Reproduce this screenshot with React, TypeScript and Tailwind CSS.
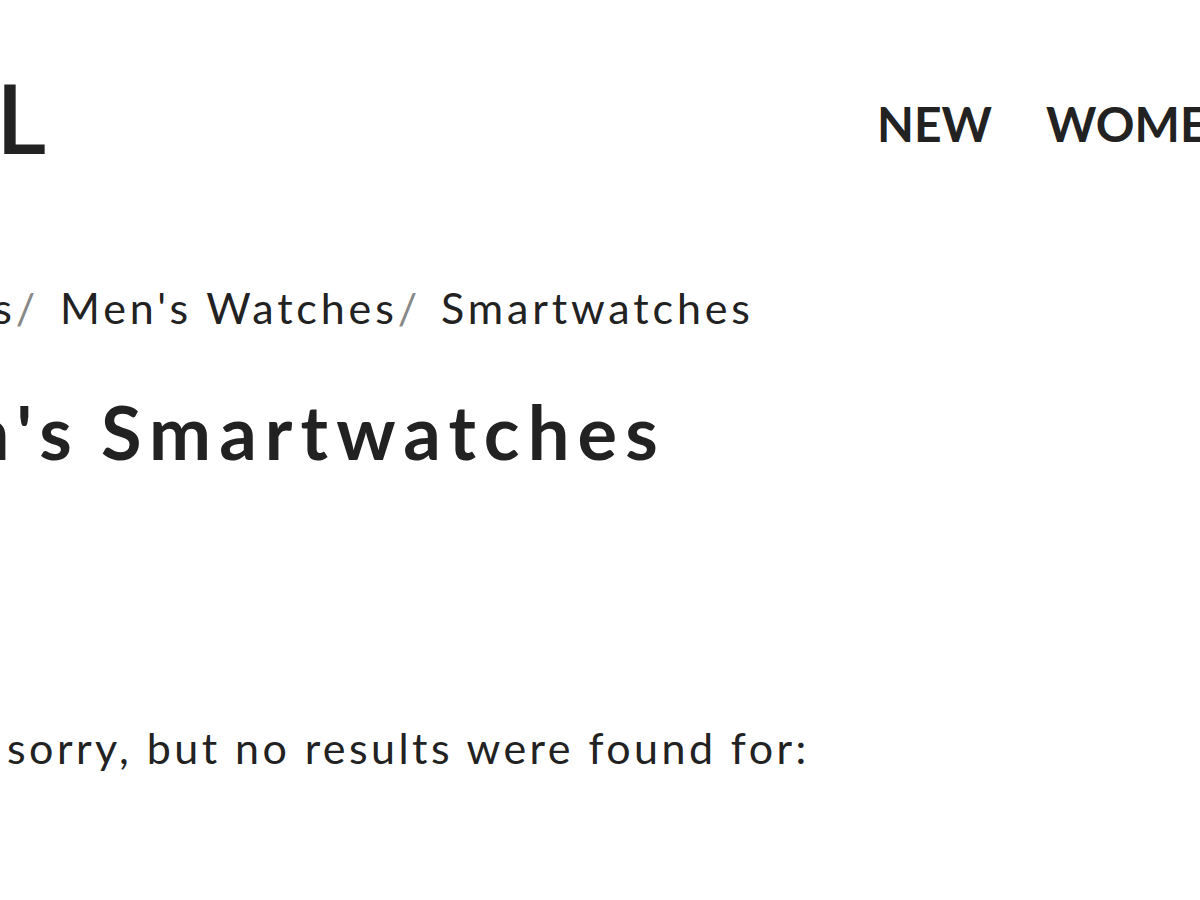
export default function App() {
  return (
    <div
      className="w-[1200px] h-[900px] overflow-hidden bg-white text-[#222222]"
      style={{ fontFamily: 'Lato, "Noto Sans", sans-serif' }}
    >
      {/* header */}
      <div className="flex items-start h-[240px] pt-[68px]">
        <div className="flex justify-end w-[48px] overflow-hidden shrink-0">
          <span className="text-[97px] leading-none font-semibold whitespace-nowrap tracking-[2px]">FOSSIL</span>
        </div>
        <nav className="flex gap-[54px] pt-[32px] ml-[829px] shrink-0 whitespace-nowrap">
          <span className="text-[48px] leading-none font-bold">NEW</span>
          <span className="text-[48px] leading-none font-bold">WOMEN</span>
          <span className="text-[48px] leading-none font-bold">MEN</span>
        </nav>
      </div>

      {/* breadcrumb */}
      <div className="flex items-center whitespace-nowrap text-[43px] leading-none tracking-[0.09em] h-[90px] mt-[22px]">
        <span className="flex justify-end w-[39px] overflow-hidden shrink-0">
          <span>Watches<span className="text-[#888888]">/</span></span>
        </span>
        <span className="ml-[21px]">
          Men's Watches<span className="text-[#888888]">/</span>
        </span>
        <span className="ml-[20px]">Smartwatches</span>
      </div>

      {/* title */}
      <div className="flex whitespace-nowrap mt-[43px] text-[74px] leading-none font-bold tracking-[0.11em]">
        <span className="flex justify-end w-[80px] overflow-hidden shrink-0">
          <h1>Men's</h1>
        </span>
        <span className="ml-[21px]">Smartwatches</span>
      </div>

      {/* empty results */}
      <div className="whitespace-nowrap mt-[257px] pl-[7px] text-[43px] leading-none tracking-[0.08em]">
        sorry, but no results were found for:
      </div>
    </div>
  );
}
